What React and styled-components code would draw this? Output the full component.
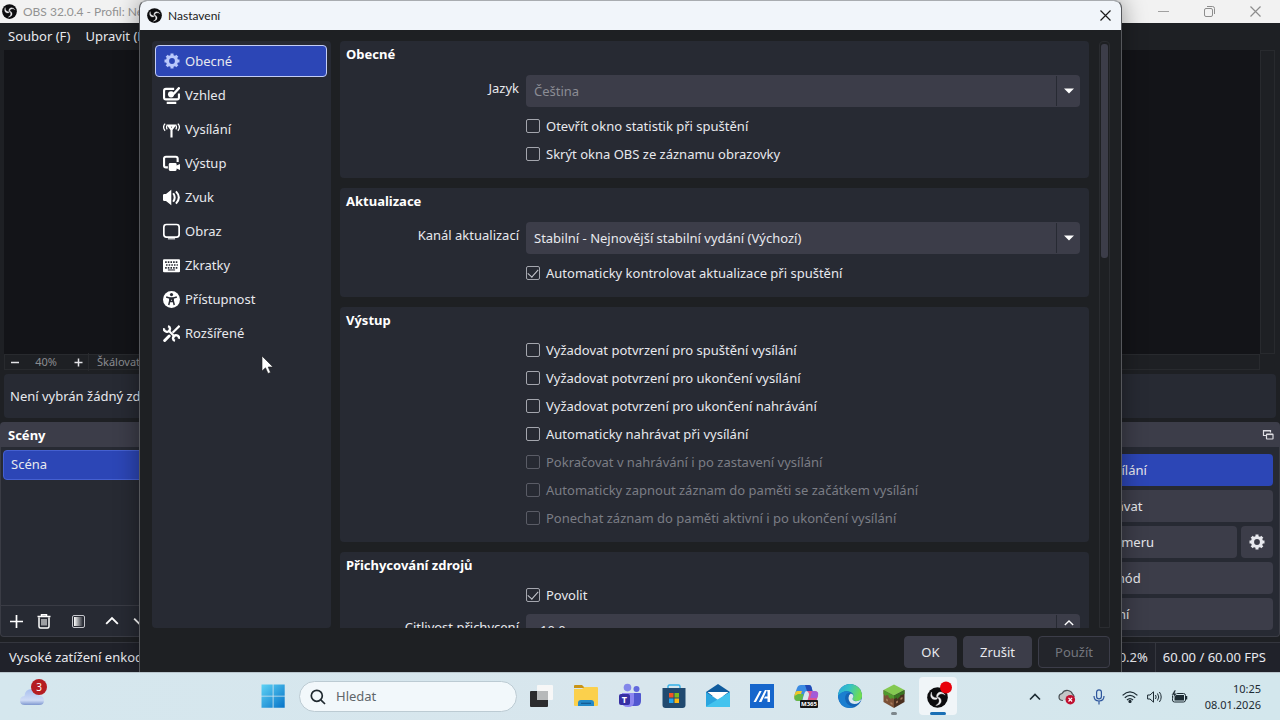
import React from 'react';
import styled, { createGlobalStyle } from 'styled-components';

const GlobalStyle = createGlobalStyle`
  * { box-sizing: border-box; }
  body {
    margin: 0;
    background: #1e2024;
    font-family: "Noto Sans", "Open Sans", sans-serif;
    font-size: 13px;
    line-height: 18px;
    color: #e8e9ee;
  }
  button, input, select { font: inherit; color: inherit; margin: 0; }
  svg { display: block; flex: none; }
`;

const Desktop = styled.div`
  min-height: 100vh;
  display: flex;
  flex-direction: column;
`;

const Stage = styled.div`
  position: relative;
  flex: 1;
  display: flex;
  overflow: hidden;
`;

const IconButton = styled.button`
  width: ${p => p.$w || 28}px;
  height: ${p => p.$h || 28}px;
  margin-left: ${p => p.$gap || 0}px;
  padding: 0;
  border: 0;
  background: none;
  display: flex;
  align-items: center;
  justify-content: center;
`;

/* ---------- main window ---------- */

const MainWindow = styled.div`
  flex: 1;
  min-width: 0;
  display: flex;
  flex-direction: column;
  white-space: nowrap;
`;

const MainTitle = styled.header`
  height: 23px;
  display: flex;
  align-items: center;
  gap: 6px;
  padding: 0 2px 0 2px;
  background: #f2f2f2;
  color: #929292;
  font-family: Lato, "Noto Sans", sans-serif;
  font-size: 12px;
`;

const TitleText = styled.span`
  width: 120px;
  overflow: hidden;
`;

const WindowButtons = styled.div`
  display: flex;
  margin-left: auto;
`;

const MenuBar = styled.nav`
  height: 27px;
  display: flex;
  align-items: center;
  gap: 15px;
  padding: 0 0 2px 8px;
`;

const MenuItem = styled.button`
  padding: 0;
  border: 0;
  background: none;
`;

const PreviewRow = styled.div`
  flex: 1;
  display: flex;
  padding: 0 5px 0 4px;
`;

const Preview = styled.div`
  flex: 1;
  background: #131418;
`;

const PreviewScroll = styled.div`
  width: 15px;
  border: 1px solid #282a2e;
`;

const ZoomRow = styled.div`
  height: 16px;
  margin: 0 20px 0 4px;
  border: 1px solid #282a2e;
  display: flex;
  align-items: center;
  color: #8b8c91;
  font-size: 11px;
`;

const ZoomValue = styled.span`
  width: 46px;
  text-align: center;
`;

const ZoomMode = styled.span`
  border-left: 1px solid #282a2e;
  padding-left: 8px;
`;

const ContextBar = styled.div`
  height: 44px;
  margin: 4px;
  padding: 0 6px;
  display: flex;
  align-items: center;
  border-radius: 4px;
  background: #272a33;
`;

const Docks = styled.div`
  display: grid;
  grid-template-columns: 1fr 358px;
  gap: 4px;
`;

const Dock = styled.section`
  display: flex;
  flex-direction: column;
`;

const DockHeader = styled.h2`
  height: 25px;
  margin: 0;
  padding: 0 4px 0 8px;
  display: flex;
  align-items: center;
  justify-content: space-between;
  border-radius: 4px 4px 0 0;
  background: #3c3d49;
  color: #fff;
  font-size: 13px;
`;

const DockBody = styled.div`
  height: 190px;
  display: flex;
  flex-direction: column;
  gap: 4px;
  padding: ${p => p.$padding || '0'};
  border: 1px solid #3a3c45;
  border-top: 0;
  border-radius: 0 0 4px 4px;
  background: #272a33;
`;

const SceneList = styled.div`
  flex: 1;
  padding: 3px 2px;
`;

const SceneRow = styled.button`
  width: 100%;
  height: 30px;
  padding: 0 7px 2px;
  border: 1px solid #4560d0;
  border-radius: 4px;
  background: #2c46b6;
  text-align: left;
`;

const DockTools = styled.div`
  height: 31px;
  display: flex;
  align-items: center;
  padding-left: 1px;
  border-top: 1px solid #3a3c45;
`;

const ControlRow = styled.div`
  display: flex;
  gap: 4px;
`;

const ControlButton = styled.button`
  flex: ${p => (p.$square ? '0 0 32px' : '1')};
  height: 32px;
  padding: 0;
  border: 0;
  border-radius: 4px;
  background: ${p => (p.$active ? '#2c46b6' : '#3c3d49')};
  display: flex;
  align-items: center;
  justify-content: center;
`;

const StatusBar = styled.footer`
  height: 30px;
  margin-top: 5px;
  display: flex;
  align-items: center;
  border-top: 1px solid #34363e;
  background: #20222a;
`;

const StatusText = styled.span`
  line-height: 29px;
  padding: 0 ${p => p.$right || 7}px 0 ${p => p.$left || 7}px;
  margin-left: ${p => (p.$push ? 'auto' : 0)};
  border-left: ${p => (p.$divider ? '1px solid #34363e' : 0)};
`;

/* ---------- settings dialog ---------- */

const Dialog = styled.form`
  position: absolute;
  top: 0;
  bottom: 0;
  left: 139px;
  right: 158px;
  display: flex;
  flex-direction: column;
  border: 1px solid #55575b;
  border-top-color: #a9acb0;
  border-bottom: 0;
  border-radius: 8px 8px 0 0;
  overflow: hidden;
  background: #1e2023;
  box-shadow: 0 0 24px rgba(0, 0, 0, 0.4);
`;

const DialogTitle = styled.header`
  height: 29px;
  flex: none;
  display: flex;
  align-items: center;
  gap: 6px;
  padding: 0 2px 0 7px;
  background: #f1f5fa;
  color: #1b1b1b;
  font-family: Lato, "Noto Sans", sans-serif;
  font-size: 12px;
`;

const DialogBody = styled.div`
  flex: 1;
  min-height: 0;
  display: flex;
  gap: 9px;
  padding: 11px 11px 0 12px;
`;

const Sidebar = styled.nav`
  width: 179px;
  flex: none;
  display: flex;
  flex-direction: column;
  gap: 2px;
  padding: 4px 4px 4px 3px;
  border-radius: 4px;
  background: #272a33;
`;

const NavItem = styled.button`
  height: 32px;
  display: flex;
  align-items: center;
  gap: 5px;
  padding: 0 7px;
  border: 1px solid ${p => (p.$active ? '#c3cdf6' : 'transparent')};
  border-radius: 4px;
  background: ${p => (p.$active ? '#2c46b6' : 'none')};
  svg { color: ${p => (p.$active ? '#b9c8fb' : '#fff')}; }
`;

const Pages = styled.div`
  flex: 1;
  min-width: 0;
  overflow: hidden;
  display: flex;
  flex-direction: column;
  gap: 10px;
`;

const Group = styled.fieldset`
  flex: none;
  min-width: 0;
  margin: 0;
  padding: 0 9px 10px 6px;
  border: 0;
  border-radius: 4px;
  background: #272a33;
`;

const GroupTitle = styled.legend`
  float: left;
  width: 100%;
  height: 29px;
  padding: 0;
  line-height: 26px;
  font-weight: 700;
  color: #fff;
`;

const Rows = styled.div`
  clear: both;
`;

const FieldRow = styled.div`
  display: grid;
  grid-template-columns: 173px 1fr;
  gap: 7px;
  padding: 5px 0;
`;

const FieldLabel = styled.label`
  text-align: right;
  line-height: 26px;
  white-space: nowrap;
`;

const FieldBox = styled.div`
  position: relative;
  display: flex;
`;

const Select = styled.select`
  flex: 1;
  height: 32px;
  padding: 0 32px 0 8px;
  border: 0;
  border-radius: 4px;
  appearance: none;
  background: #3c3d49;
  opacity: 1;
  &:disabled { color: #8b8c94; }
`;

const Spin = styled.input`
  flex: 1;
  height: 32px;
  padding: 0 32px 0 14px;
  border: 0;
  border-radius: 4px;
  background: #3c3d49;
`;

const FieldEnd = styled.span`
  position: absolute;
  top: 1px;
  right: 0;
  bottom: 1px;
  width: 24px;
  display: flex;
  align-items: ${p => (p.$top ? 'flex-start' : 'center')};
  justify-content: center;
  padding-top: ${p => (p.$top ? 3 : 0)}px;
  border-left: 1px solid #272a33;
  pointer-events: none;
`;

const CheckRow = styled.label`
  height: 28px;
  margin-left: 180px;
  display: flex;
  align-items: center;
  gap: 6px;
  white-space: nowrap;
  color: ${p => (p.$disabled ? '#7b7d85' : 'inherit')};
`;

const CheckInput = styled.input`
  appearance: none;
  width: 14px;
  height: 14px;
  border: 1px solid #a4a6ae;
  border-radius: 2px;
  display: grid;
  place-items: center;
  &:disabled { border-color: #5a5c66; }
  &:checked::after {
    content: "";
    width: 9px;
    height: 5px;
    margin-top: -3px;
    border: solid #c9cbd2;
    border-width: 0 0 1px 1px;
    transform: rotate(-48deg);
  }
`;

const ScrollTrack = styled.div`
  width: 11px;
  flex: none;
  margin-left: 1px;
  padding: 2px 1px;
  border: 1px solid #2a2c30;
  border-radius: 4px 4px 0 0;
`;

const ScrollThumb = styled.div`
  height: 214px;
  border-radius: 3px;
  background: #3c3d49;
`;

const DialogFooter = styled.footer`
  height: 44px;
  flex: none;
  display: flex;
  align-items: center;
  justify-content: flex-end;
  gap: 6px;
  padding: 4px 11px 0 0;
`;

const DialogButton = styled.button`
  height: 32px;
  min-width: 53px;
  padding: 0 16px;
  border: 1px solid #3c3d49;
  border-radius: 4px;
  background: #3c3d49;
  &:disabled {
    background: #23252b;
    color: #74767e;
  }
`;

const Pointer = styled.svg`
  position: absolute;
  left: 261px;
  top: 355px;
`;

/* ---------- taskbar ---------- */

const Taskbar = styled.footer`
  height: 48px;
  display: grid;
  grid-template-columns: 251px auto 1fr;
  align-items: center;
  border-top: 1px solid #b9c6cd;
  background: linear-gradient(90deg, #d5e7ee, #d8e6ed 50%, #d3e7ed);
  color: #1d2b33;
  font-size: 11px;
`;

const Weather = styled.button`
  position: relative;
  width: 36px;
  height: 32px;
  margin-left: 15px;
  padding: 0;
  border: 0;
  background: none;
`;

const Badge = styled.span`
  position: absolute;
  top: -2px;
  right: 4px;
  width: 16px;
  height: 16px;
  border-radius: 8px;
  background: #b51d22;
  color: #fff;
  font-size: 10px;
  line-height: 16px;
`;

const Apps = styled.div`
  display: flex;
  align-items: center;
`;

const SearchBox = styled.label`
  width: 218px;
  height: 31px;
  margin: 0 3px 0 4px;
  padding: 0 10px;
  display: flex;
  align-items: center;
  gap: 10px;
  border: 1px solid #bccbd3;
  border-radius: 16px;
  background: #f2f8fb;
`;

const SearchInput = styled.input`
  min-width: 0;
  flex: 1;
  padding: 0 0 2px;
  border: 0;
  background: none;
  font-size: 13px;
  &::placeholder { color: #5f666a; opacity: 1; }
`;

const AppButton = styled.button`
  width: 44px;
  height: 44px;
  padding: 0;
  border: 0;
  background: none;
  display: flex;
  justify-content: center;
`;

const AppTile = styled.span`
  position: relative;
  width: 38px;
  height: 38px;
  margin-top: 2px;
  display: flex;
  align-items: center;
  justify-content: center;
  border-radius: 4px;
  background: ${p => (p.$active ? '#f0f5f8' : 'none')};
  &::after {
    content: "";
    position: absolute;
    bottom: 0;
    width: ${p => (p.$active ? 16 : 6)}px;
    height: 3px;
    border-radius: 2px;
    background: ${p => (p.$active ? '#1a6fb5' : p.$running ? '#7d868b' : 'none')};
  }
`;

const Tray = styled.div`
  display: flex;
  align-items: center;
  justify-content: flex-end;
  padding-right: 19px;
`;

const Clock = styled.time`
  width: 66px;
  text-align: right;
  line-height: 16px;
`;

/* ---------- icons ---------- */

const ObsLogo = ({ size, x, y }) => (
  <svg width={size} height={size} x={x} y={y} viewBox="0 0 24 24">
    <circle cx="12" cy="12" r="11.8" fill="#0c0c0e" />
    {[0, 120, 240].map(a => (
      <path key={a} d="M12 12C15.2 14.6 14.4 19 10 21C16.6 20.6 18.2 14.6 13.600 11.600Z"
        transform={`rotate(${a} 12 12)`} fill="#eeeef0" stroke="#eeeef0" strokeWidth=".4" strokeLinejoin="round" />
    ))}
  </svg>
);

const Gear = ({ size = 16 }) => (
  <svg width={size} height={size} viewBox="0 0 16 16" stroke="currentColor" fill="none">
    <circle cx="8" cy="8" r="4.5" strokeWidth="3.2" />
    {[0, 45, 90, 135].map(a => (
      <path key={a} d="M8 .5V3.400M8 12.600V15.500" strokeWidth="3" transform={`rotate(${a} 8 8)`} />
    ))}
  </svg>
);

const CloseIcon = ({ color }) => (
  <svg width="11" height="11" viewBox="0 0 11 11"><path d="M.5.5l10 10M10.5.5l-10 10" stroke={color} strokeWidth="1.2" /></svg>
);

const navIcons = {
  look: (
    <g fill="none" stroke="currentColor" strokeWidth="2">
      <path d="M10.5 1.800H2.800Q1 1.800 1 3.600V9.800Q1 11.600 2.800 11.600H13.200Q15 11.600 15 9.800V6" />
      <path d="M3.500 14.900H12.500" strokeWidth="2" />
      <path d="M15.600.4L10 6.600" strokeWidth="2.200" />
      <circle cx="7.600" cy="6.900" r="2.900" fill="currentColor" stroke="none" />
    </g>
  ),
  stream: (
    <g fill="none" stroke="currentColor" strokeWidth="1.2">
      <path d="M2 2.400Q-.9 5.800 2 9.200M4 3.800Q2.600 5.800 4 7.800M14 2.400Q16.900 5.800 14 9.200M12 3.800Q13.400 5.800 12 7.800" />
      <path d="M5.200 4.400L8 8.200L10.800 4.400ZM8 7V15.500" strokeWidth="2" />
    </g>
  ),
  output: (
    <g fill="none" stroke="currentColor" strokeWidth="2">
      <path d="M4.600 11.600H2.800Q1 11.600 1 9.800V3.400Q1 1.600 2.800 1.600H12Q13.800 1.600 13.800 3.400V6.500" />
      <path d="M6.800 7.600H11.600Q12.800 7.600 12.800 8.800V9.800L16 8.400V14L12.800 12.600V13.600Q12.800 15 11.600 15H6.800Q5.400 15 5.400 13.600V8.800Q5.400 7.600 6.800 7.600Z" fill="currentColor" stroke="none" />
    </g>
  ),
  sound: (
    <g fill="none" stroke="currentColor" strokeWidth="1.9">
      <path d="M0 6Q0 4.800 1.200 4.800H2.800L7.800 .8V15.200L2.800 11.200H1.200Q0 11.200 0 10Z" fill="currentColor" stroke="none" />
      <path d="M9.600 4Q12.400 8 9.600 12M12.200 2.200Q17.600 8 12.200 13.800" />
    </g>
  ),
  video: (
    <g fill="none" stroke="currentColor" strokeWidth="1.6">
      <rect x=".8" y="1.400" width="14.4" height="11.8" rx="2.400" />
      <path d="M4.600 14.800H11.400" strokeWidth="1.400" opacity=".7" />
    </g>
  ),
  keys: (
    <g>
      <rect y="2" width="16" height="12.4" rx="1" fill="currentColor" />
      <path d="M2 4.8H14M2.8 7.6H14M2 10.2H14" stroke="#272a33" strokeWidth="1.500" strokeDasharray="1.5 1" />
      <path d="M4.6 12.2H11.4" stroke="#272a33" strokeWidth="1" />
    </g>
  ),
  access: (
    <g>
      <circle cx="8" cy="8" r="8" fill="currentColor" />
      <circle cx="8" cy="3.4" r="1.5" fill="#272a33" />
      <path d="M3 5.6L6.4 6.6V9L5.4 13.2M13 5.6L9.6 6.6V9L10.6 13.2M6.4 6.6H9.6M7 7.6H9V10H7Z" fill="none" stroke="#272a33" strokeWidth="1.400" />
    </g>
  ),
  tools: (
    <g fill="none" stroke="currentColor">
      <path d="M5 5L11.400 11.400" strokeWidth="2" />
      <path d="M1 3A2.800 2.800 0 1 0 4.800 1M15 13A2.800 2.800 0 1 0 11.200 15" strokeWidth="2.200" />
      <path d="M15.600.8L9 7.200" strokeWidth="2" />
      <path d="M1.600 14.600L5.800 10.400" strokeWidth="2.800" strokeLinecap="round" />
    </g>
  )
};

const NavIcon = ({ name }) => (
  name === 'gear' ? <Gear size={16} /> : <svg width="17" height="17" viewBox="0 0 16 16">{navIcons[name]}</svg>
);

const NavGlyph = styled.span`
  width: 17px;
  display: flex;
  justify-content: center;
`;

const appIcons = {
  start: (
    <g>
      <defs>
        <linearGradient id="win" x1="0" y1="0" x2="1" y2="1"><stop stopColor="#5fd3f5" /><stop offset="1" stopColor="#0673c8" /></linearGradient>
      </defs>
      <path d="M.5 .5H11.7V11.7H.5ZM12.500 .5H23.700V11.700H12.500ZM.5 12.500H11.700V23.700H.5ZM12.500 12.500H23.700V23.700H12.500Z" fill="url(#win)" />
    </g>
  ),
  desk: (
    <g>
      <rect x="7" y="1" width="16" height="15" rx="1" fill="#f7f7f7" />
      <rect x="0" y="7" width="18" height="16" rx="1" fill="#2b2b2d" />
      <rect x="7" y="7" width="11" height="9" fill="#b7b9ba" />
    </g>
  ),
  files: (
    <g>
      <path d="M0 2Q0 1 1 1H8L11 4H0Z" fill="#c99316" />
      <path d="M0 5H8L10.5 3H23Q24 3 24 4V21Q24 22 23 22H1Q0 22 0 21Z" fill="#fbd04c" />
      <path d="M4 22V19Q4 16 7 16H17Q20 16 20 19V22Z" fill="#2389c8" />
      <path d="M7 19.3H17" stroke="#14588f" strokeWidth="1.2" />
    </g>
  ),
  teams: (
    <g>
      <circle cx="9.5" cy="3.6" r="3.8" fill="#8387ea" />
      <circle cx="18.5" cy="5" r="3" fill="#6269dd" />
      <path d="M13 9H22Q23 9 23 10V17Q23 22 18 22H13Z" fill="#5157d0" />
      <path d="M4 9H16V18Q16 23 10 23Q4 23 4 18Z" fill="#8c85f0" />
      <rect x="1" y="10" width="11" height="11" rx="2" fill="#3730a3" />
      <text x="3.700" y="18.800" fill="#fff" fontSize="9" fontWeight="700">T</text>
    </g>
  ),
  store: (
    <g>
      <path d="M6 6V2.500Q6 1 7.500 1H16.500Q18 1 18 2.500V6" fill="none" stroke="#35b1e8" strokeWidth="1.400" />
      <path d="M.5 4H23.500V21Q23.500 24 20.500 24H3.500Q.5 24 .5 21Z" fill="#214a70" />
      <path d="M7 9H11.500V13.500H7Z" fill="#f05425" />
      <path d="M12.500 9H17V13.500H12.500Z" fill="#7fbb1c" />
      <path d="M7 14.500H11.500V19H7Z" fill="#22a4ef" />
      <path d="M12.500 14.500H17V19H12.500Z" fill="#fdb812" />
    </g>
  ),
  mail: (
    <g>
      <path d="M0 8L12 0L24 8V12H0Z" fill="#0f5b9d" />
      <path d="M1.500 8H22.500L12 16Z" fill="#fff" />
      <path d="M0 8L12 16L24 8V22Q24 23 23 23H1Q0 23 0 22Z" fill="#2ba5df" />
      <path d="M24 8L0 22.500Q0 23 1 23H23Q24 23 24 22Z" fill="#43c3ee" />
    </g>
  ),
  asus: (
    <g>
      <rect width="24" height="24" fill="#1666cc" />
      <path d="M3.500 18L9.500 7H11.700L6 18ZM8.800 18L15 6H17L11.500 18ZM17 6H20V18H17.500V14.500H14L15 12.500H17.500V8Z" fill="#fff" />
    </g>
  ),
  copilot: (
    <g>
      <path d="M7 1H15Q17 1 17.500 3L18.500 7H13Q11 7 10.500 9L8 17H4Q-1 17 .5 11L3 4Q4 1 7 1Z" fill="#3b8be2" />
      <path d="M3 7H8L5 17Q-1 17 .5 11L1.500 8Z" fill="#f0c62c" />
      <path d="M4 10H9.500L8 17H4Q0 17 .5 12Z" fill="#62b949" />
      <path d="M14 7H20Q25 7 24 12L22 18H13L15 11Q15.500 9 13 7Z" fill="#e0568f" />
      <path d="M11 1H15Q17 1 17.500 3L18.500 7H13Z" fill="#214ab6" />
      <path d="M18 7H20Q25 7 24 11L23 14H16Z" fill="#a35bd8" />
      <rect x="6" y="16" width="18" height="8" rx="1" fill="#151515" />
      <text x="7" y="22.300" fill="#fff" fontSize="6" fontWeight="700">M365</text>
    </g>
  ),
  edge: (
    <g>
      <defs>
        <linearGradient id="edgeTop" x1="0" y1="0" x2="1" y2=".3"><stop stopColor="#2aa5dc" /><stop offset=".5" stopColor="#36c3c4" /><stop offset="1" stopColor="#6fdc52" /></linearGradient>
      </defs>
      <circle cx="12" cy="12" r="12" fill="#1464b5" />
      <path d="M0 12A12 12 0 0 1 24 12Q24 17 18.500 17Q14 17 14.500 14.500Q17 11 13.500 8.500Q6 5 0 12Z" fill="url(#edgeTop)" />
      <path d="M14.600 14.300Q14 17 18 17.200Q21 17.200 23.400 15.200Q21.500 20 16.500 20Q10.500 19.500 10.500 14Q10.600 10.500 12.800 9.500Q17 11 14.600 14.300Z" fill="#d9e8ee" />
      <path d="M0 12Q5 5.500 12.500 8.500Q7 8.500 7 14.500Q8 22 16 23Q2 27 0 12Z" fill="#1b7fd0" />
    </g>
  ),
  cube: (
    <g>
      <path d="M1.500 6L12 .5L22.500 6L12 11.500Z" fill="#84c951" />
      <path d="M1.500 6L12 11.500V24L1.500 18Z" fill="#7b5137" />
      <path d="M22.500 6L12 11.500V24L22.500 18Z" fill="#4a2f20" />
      <path d="M1.500 6L12 11.500V15L9.500 13.500V15.500L6.500 13V11.500L4 11V12.500L1.500 10Z" fill="#4f9a2c" />
      <path d="M22.500 6L12 11.500V15L15 13.500V15.500L18 12.500V11.500L22.500 10Z" fill="#3a7422" />
      <path d="M4 14.500l2 1v2l-2-1zM8.500 18l2 1v2l-2-1zM14 17.500l2-1v2l-2 1zM18.500 14l2-1v2l-2 1z" fill="#a4795a" />
    </g>
  ),
  obs: (
    <g>
      <ObsLogo size={21} x={1} y={3} />
      <circle cx="20" cy="3.500" r="6" fill="#e8000b" />
    </g>
  )
};

const AppIcon = ({ name }) => (
  <svg width="24" height="24" viewBox="0 0 24 24" overflow="visible">{appIcons[name]}</svg>
);

const Chevron = ({ down, color = 'currentColor', size = 12 }) => (
  <svg width={size} height={size} viewBox="0 0 12 12">
    <path d={down ? 'M1 4L6 9L11 4' : 'M1 8.500L6 3.500L11 8.500'} fill="none" stroke={color} strokeWidth="1.600" />
  </svg>
);

/* ---------- data ---------- */

const navItems = [
  ['gear', 'Obecné'],
  ['look', 'Vzhled'],
  ['stream', 'Vysílání'],
  ['output', 'Výstup'],
  ['sound', 'Zvuk'],
  ['video', 'Obraz'],
  ['keys', 'Zkratky'],
  ['access', 'Přístupnost'],
  ['tools', 'Rozšířené']
];

const outputChecks = [
  { text: 'Vyžadovat potvrzení pro spuštění vysílání' },
  { text: 'Vyžadovat potvrzení pro ukončení vysílání' },
  { text: 'Vyžadovat potvrzení pro ukončení nahrávání' },
  { text: 'Automaticky nahrávat při vysílání' },
  { text: 'Pokračovat v nahrávání i po zastavení vysílání', disabled: true },
  { text: 'Automaticky zapnout záznam do paměti se začátkem vysílání', disabled: true },
  { text: 'Ponechat záznam do paměti aktivní i po ukončení vysílání', disabled: true }
];

const apps = ['desk', 'files', 'teams', 'store', 'mail', 'asus', 'copilot', 'edge', 'cube', 'obs'];

/* ---------- parts ---------- */

function Check({ text, checked, disabled }) {
  return (
    <CheckRow $disabled={disabled}>
      <CheckInput type="checkbox" defaultChecked={checked} disabled={disabled} />
      {text}
    </CheckRow>
  );
}

function SelectField({ id, label, value, disabled }) {
  return (
    <FieldRow>
      <FieldLabel htmlFor={id}>{label}</FieldLabel>
      <FieldBox>
        <Select id={id} disabled={disabled}>
          <option>{value}</option>
        </Select>
        <FieldEnd>
          <svg width="10" height="6" viewBox="0 0 10 6"><path d="M0 .5H10L5 5.500Z" fill="#fff" /></svg>
        </FieldEnd>
      </FieldBox>
    </FieldRow>
  );
}

function ObsWindow() {
  return (
    <MainWindow>
      <MainTitle>
        <ObsLogo size={15} />
        <TitleText>OBS 32.0.4 - Profil: Nepojmenovaný</TitleText>
        <WindowButtons>
          <IconButton $w={46} $h={22} aria-label="Minimalizovat">
            <svg width="11" height="11" viewBox="0 0 11 11"><path d="M0 5.500H11" stroke="#a0a0a0" /></svg>
          </IconButton>
          <IconButton $w={46} $h={22} aria-label="Obnovit">
            <svg width="11" height="11" viewBox="0 0 11 11" fill="none" stroke="#8d8d8d">
              <rect x=".5" y="2.500" width="8" height="8" rx="1.500" />
              <path d="M3 .5H8.500Q10.500 .5 10.500 2.500V8" />
            </svg>
          </IconButton>
          <IconButton $w={46} $h={22} aria-label="Zavřít"><CloseIcon color="#8d8d8d" /></IconButton>
        </WindowButtons>
      </MainTitle>
      <MenuBar>
        <MenuItem>Soubor (F)</MenuItem>
        <MenuItem>Upravit (E)</MenuItem>
      </MenuBar>
      <PreviewRow>
        <Preview />
        <PreviewScroll />
      </PreviewRow>
      <ZoomRow>
        <IconButton $w={18} $h={14} aria-label="Oddálit">
          <svg width="9" height="9" viewBox="0 0 9 9"><path d="M1 4.500H9" stroke="#e4e4e8" strokeWidth="1.500" /></svg>
        </IconButton>
        <ZoomValue>40%</ZoomValue>
        <IconButton $w={19} $h={14} aria-label="Přiblížit">
          <svg width="9" height="9" viewBox="0 0 9 9"><path d="M.5 4.500H8.500M4.500 .5V8.500" stroke="#e4e4e8" strokeWidth="1.500" /></svg>
        </IconButton>
        <ZoomMode>Škálovat na okno</ZoomMode>
      </ZoomRow>
      <ContextBar>Není vybrán žádný zdroj</ContextBar>
      <Docks>
        <Dock>
          <DockHeader>Scény</DockHeader>
          <DockBody>
            <SceneList><SceneRow>Scéna</SceneRow></SceneList>
            <DockTools>
              <IconButton aria-label="Přidat scénu">
                <svg width="13" height="13" viewBox="0 0 13 13"><path d="M0 6.500H13M6.500 0V13" stroke="#fff" strokeWidth="1.700" /></svg>
              </IconButton>
              <IconButton aria-label="Odebrat scénu">
                <svg width="14" height="15" viewBox="0 0 14 15" fill="none" stroke="#fff" strokeWidth="1.500">
                  <path d="M.5 2.500H13.500M4.500 2V.8H9.500V2M2 3.500V12.500Q2 14 3.500 14H10.500Q12 14 12 12.500V3.500" />
                  <path d="M5 5V11.500M7 5V11.500M9 5V11.500" strokeWidth="1.100" />
                </svg>
              </IconButton>
              <IconButton $gap={6} aria-label="Filtry scény">
                <svg width="13" height="13" viewBox="0 0 13 13">
                  <defs><linearGradient id="fade"><stop stopColor="#fff" /><stop offset="1" stopColor="#272a33" /></linearGradient></defs>
                  <rect x=".5" y=".5" width="12" height="12" rx="1.500" fill="none" stroke="#c5c6cc" />
                  <rect x="2" y="2" width="9" height="9" fill="url(#fade)" />
                </svg>
              </IconButton>
              <IconButton $gap={6} aria-label="Posunout nahoru"><Chevron size={14} color="#fff" /></IconButton>
              <IconButton aria-label="Posunout dolů"><Chevron size={14} color="#fff" down /></IconButton>
            </DockTools>
          </DockBody>
        </Dock>
        <Dock>
          <DockHeader>
            Ovládací prvky
            <svg width="14" height="12" viewBox="0 0 14 12" fill="none" stroke="#dddde2" strokeWidth="1.200">
              <path d="M4 6.500H1.500V1.500H8.500V3.500M1.500 2H8.500" />
              <rect x="4.500" y="5" width="6.500" height="5" rx=".5" /><path d="M4.500 5.500H11" />
            </svg>
          </DockHeader>
          <DockBody $padding="7px 6px 6px 2px">
            <ControlRow><ControlButton $active>Zastavit vysílání</ControlButton></ControlRow>
            <ControlRow><ControlButton>Začít nahrávat</ControlButton></ControlRow>
            <ControlRow>
              <ControlButton>Spustit virtuální kameru</ControlButton>
              <ControlButton $square aria-label="Nastavení kamery"><Gear size={16} /></ControlButton>
            </ControlRow>
            <ControlRow><ControlButton>Studiový mód</ControlButton></ControlRow>
            <ControlRow><ControlButton>Nastavení</ControlButton></ControlRow>
          </DockBody>
        </Dock>
      </Docks>
      <StatusBar>
        <StatusText $left={9}>Vysoké zatížení enkodéru!</StatusText>
        <StatusText $push>CPU: 0.2%</StatusText>
        <StatusText $divider $right={14}>60.00 / 60.00 FPS</StatusText>
      </StatusBar>
    </MainWindow>
  );
}

function SettingsDialog() {
  return (
    <Dialog onSubmit={e => e.preventDefault()}>
      <DialogTitle>
        <ObsLogo size={15} />
        Nastavení
        <WindowButtons>
          <IconButton type="button" aria-label="Zavřít"><CloseIcon color="#1b1b1b" /></IconButton>
        </WindowButtons>
      </DialogTitle>
      <DialogBody>
        <Sidebar>
          {navItems.map(([icon, text], i) => (
            <NavItem key={icon} type="button" $active={i === 0}>
              <NavGlyph><NavIcon name={icon} /></NavGlyph>
              {text}
            </NavItem>
          ))}
        </Sidebar>
        <Pages>
          <Group>
            <GroupTitle>Obecné</GroupTitle>
            <Rows>
              <SelectField id="language" label="Jazyk" value="Čeština" disabled />
              <Check text="Otevřít okno statistik při spuštění" />
              <Check text="Skrýt okna OBS ze záznamu obrazovky" />
            </Rows>
          </Group>
          <Group>
            <GroupTitle>Aktualizace</GroupTitle>
            <Rows>
              <SelectField id="channel" label="Kanál aktualizací" value="Stabilní - Nejnovější stabilní vydání (Výchozí)" />
              <Check text="Automaticky kontrolovat aktualizace při spuštění" checked />
            </Rows>
          </Group>
          <Group>
            <GroupTitle>Výstup</GroupTitle>
            <Rows>{outputChecks.map(c => <Check key={c.text} {...c} />)}</Rows>
          </Group>
          <Group>
            <GroupTitle>Přichycování zdrojů</GroupTitle>
            <Rows>
              <Check text="Povolit" checked />
              <FieldRow>
                <FieldLabel htmlFor="snap">Citlivost přichycení</FieldLabel>
                <FieldBox>
                  <Spin id="snap" type="text" defaultValue="10,0" />
                  <FieldEnd $top><Chevron size={10} color="#fff" /></FieldEnd>
                </FieldBox>
              </FieldRow>
            </Rows>
          </Group>
        </Pages>
        <ScrollTrack><ScrollThumb /></ScrollTrack>
      </DialogBody>
      <DialogFooter>
        <DialogButton>OK</DialogButton>
        <DialogButton type="button">Zrušit</DialogButton>
        <DialogButton type="button" disabled>Použít</DialogButton>
      </DialogFooter>
    </Dialog>
  );
}

function WindowsTaskbar() {
  return (
    <Taskbar>
      <Weather aria-label="Počasí">
        <svg width="34" height="32" viewBox="0 0 34 32">
          <defs><linearGradient id="cloud" x1="0" y1="0" x2="0" y2="1"><stop stopColor="#a9c0ee" /><stop offset=".7" stopColor="#cfdcf6" /><stop offset="1" stopColor="#7e97cf" /></linearGradient></defs>
          <path d="M10 24Q5 24 5 19.500Q5 15.500 9.500 15Q10 8 17 8Q23 8 24 14.500Q29 15 29 19.500Q29 24 24 24Z" fill="url(#cloud)" />
        </svg>
        <Badge>3</Badge>
      </Weather>
      <Apps>
        <AppButton aria-label="Start"><AppTile><AppIcon name="start" /></AppTile></AppButton>
        <SearchBox>
          <svg width="16" height="16" viewBox="0 0 16 16" fill="none" stroke="#202a30" strokeWidth="1.700">
            <circle cx="6.800" cy="6.800" r="5.500" /><path d="M10.800 10.800L15 15" />
          </svg>
          <SearchInput type="text" placeholder="Hledat" aria-label="Hledat" />
        </SearchBox>
        {apps.map(name => (
          <AppButton key={name} aria-label={name}>
            <AppTile $active={name === 'obs'} $running={name === 'cube'}><AppIcon name={name} /></AppTile>
          </AppButton>
        ))}
      </Apps>
      <Tray>
        <IconButton $w={32} aria-label="Skryté ikony"><Chevron color="#1d2b33" size={12} /></IconButton>
        <IconButton $w={32} aria-label="Cloud">
          <svg width="18" height="16" viewBox="0 0 18 16">
            <path d="M5 11.500Q1 11.500 1 8Q1 5 4 4.500Q6 1 10 1.500Q13.500 2 14.500 5Q16 6 16 8" fill="#c3c6c7" stroke="#4b5256" strokeWidth="1.200" />
            <circle cx="12.300" cy="10.700" r="4.800" fill="#c00f2f" />
            <path d="M10.500 8.900l3.600 3.600M14.100 8.900l-3.600 3.600" stroke="#fff" strokeWidth="1.200" />
          </svg>
        </IconButton>
        <IconButton $w={32} aria-label="Mikrofon">
          <svg width="12" height="16" viewBox="0 0 12 16" fill="none" stroke="#2d559c" strokeWidth="1.200">
            <rect x="3.600" y=".8" width="4.800" height="9" rx="2.400" /><path d="M1 7Q1 12 6 12Q11 12 11 7M6 12V15.500" />
          </svg>
        </IconButton>
        <IconButton $w={30} aria-label="Wi-Fi">
          <svg width="16" height="12" viewBox="0 0 16 12" fill="none" stroke="#1d2b33" strokeWidth="1.300">
            <path d="M.6 4.400Q8-2.600 15.400 4.400M2.800 6.800Q8 2 13.200 6.800M5 9Q8 6.200 11 9" /><circle cx="8" cy="10.400" r="1" fill="#1d2b33" />
          </svg>
        </IconButton>
        <IconButton $w={18} aria-label="Hlasitost">
          <svg width="15" height="12" viewBox="0 0 15 12" fill="none" stroke="#1d2b33">
            <path d="M.6 4H3L6.500 .8V11.200L3 8H.6Z" /><path d="M8.500 4Q9.800 6 8.500 8M10.500 2.500Q13 6 10.500 9.500M12.400 1Q16 6 12.400 11" />
          </svg>
        </IconButton>
        <IconButton $w={32} aria-label="Baterie">
          <svg width="17" height="13" viewBox="0 0 17 13">
            <rect x="1.500" y="3.500" width="13" height="8.500" rx="2" fill="none" stroke="#1d2b33" />
            <rect x="3.500" y="5" width="9.500" height="5.500" fill="#1d2b33" />
            <path d="M15.500 6V9.500" stroke="#1d2b33" strokeWidth="1.500" />
            <path d="M3.500 0L.5 5H3L2 8.500L6 3.500H3.800L5 0Z" fill="#1d2b33" stroke="#d5e7ee" strokeWidth=".5" />
          </svg>
        </IconButton>
        <Clock>10:25<br />08.01.2026</Clock>
      </Tray>
    </Taskbar>
  );
}

export default function App() {
  return (
    <Desktop>
      <GlobalStyle />
      <Stage>
        <ObsWindow />
        <SettingsDialog />
        <Pointer width="13" height="20" viewBox="0 0 13 20">
          <path d="M1 1V16L4.500 12.800L7 18.500L9.500 17.400L7.200 12H12Z" fill="#fff" stroke="#1e2023" strokeWidth=".6" />
        </Pointer>
      </Stage>
      <WindowsTaskbar />
    </Desktop>
  );
}
